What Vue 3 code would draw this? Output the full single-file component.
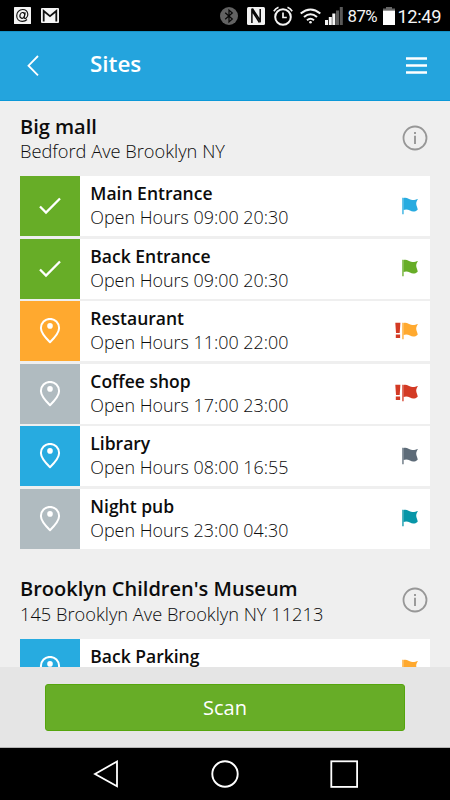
<script setup>
const groups = [
  {
    name: 'Big mall',
    address: 'Bedford Ave Brooklyn NY',
    sites: [
      { name: 'Main Entrance', hours: '09:00 20:30', tile: 'green', icon: 'check', flag: 'blue' },
      { name: 'Back Entrance', hours: '09:00 20:30', tile: 'green', icon: 'check', flag: 'green' },
      { name: 'Restaurant', hours: '11:00 22:00', tile: 'orange', icon: 'pin', flag: 'orange', alert: true },
      { name: 'Coffee shop', hours: '17:00 23:00', tile: 'gray', icon: 'pin', flag: 'red', alert: true },
      { name: 'Library', hours: '08:00 16:55', tile: 'blue', icon: 'pin', flag: 'slate' },
      { name: 'Night pub', hours: '23:00 04:30', tile: 'gray', icon: 'pin', flag: 'teal' },
    ],
  },
  {
    name: "Brooklyn Children's Museum",
    address: '145 Brooklyn Ave Brooklyn NY 11213',
    sites: [
      { name: 'Back Parking', tile: 'blue', icon: 'pin', flag: 'orange' },
    ],
  },
]
</script>

<template>
  <div class="screen">
    <div class="status">
      <svg class="s-mail" width="17" height="17" viewBox="0 0 17 17">
        <rect width="17" height="17" rx="0.6" fill="#f4f4f4" />
        <g fill="none" stroke="#111" stroke-width="1.15">
          <ellipse cx="8.3" cy="8.4" rx="2.3" ry="2.9" transform="rotate(18 8.3 8.4)" />
          <path d="M11.2 5.3 10.2 10c-.2 1.7 1 1.8 2 1 1.200-1 1.800-2.400 1.600-4C13.400 4.300 11.400 2.500 8.700 2.500 5.200 2.500 2.700 5.200 2.700 8.700c0 3.400 2.300 5.700 5.600 5.700 1.900 0 3.600-.7 4.700-1.900" />
        </g>
      </svg>
      <svg class="s-gmail" width="18" height="15" viewBox="0 0 18 15">
        <rect width="18" height="15" rx="1" fill="#f4f4f4" />
        <path d="M2.700 13.500V3L9 8.200 15.300 3v10.500" fill="none" stroke="#111" stroke-width="1.800" />
      </svg>
      <svg class="s-bt" width="18" height="18" viewBox="0 0 18 18">
        <circle cx="9" cy="9" r="9" fill="#626262" />
        <path d="M5.200 5.700 12.300 12 9 15V3l3.300 3-7.100 6.300" fill="none" stroke="#080808" stroke-width="1.200" />
      </svg>
      <svg class="s-nfc" width="18" height="18" viewBox="0 0 18 18">
        <rect width="18" height="18" rx="1.500" fill="#f2f2f2" />
        <path d="M4.900 16V3.500L12.500 15.500M5.300 1.500 13.200 13.500V2" fill="none" stroke="#080808" stroke-width="1.500" />
      </svg>
      <svg class="s-alarm" width="20" height="20" viewBox="0 0 20 20" fill="none" stroke="#f4f4f4">
        <circle cx="10" cy="11" r="7.800" stroke-width="2" />
        <path d="M10 6.500V11.500H13.800" stroke-width="1.700" />
        <path d="M.8 5.200Q2.500 2.500 5.500 1.300M14.500 1.300Q17.500 2.500 19.200 5.200" stroke-width="1.600" />
      </svg>
      <svg class="s-wifi" width="21" height="16" viewBox="0 0 21 16" fill="none" stroke="#f4f4f4" stroke-width="2.100">
        <path d="M.7 5.500Q10.500-2.500 20.300 5.500" />
        <path d="M4 9Q10.500 3.500 17 9" />
        <path d="M7 12.200Q10.500 9.300 14 12.200" />
        <circle cx="10.500" cy="14.300" r="1.300" fill="#f4f4f4" stroke="none" />
      </svg>
      <svg class="s-signal" width="18" height="18" viewBox="0 0 18 18" fill="#f4f4f4">
        <rect x="0" y="13" width="3" height="5" />
        <rect x="3.800" y="10" width="3" height="8" />
        <rect x="7.300" y="6.500" width="3" height="11.500" />
        <rect x="11" y="3.500" width="3" height="14.500" fill="#5a5a5a" />
        <rect x="14.800" y="0" width="3" height="18" fill="#5a5a5a" />
      </svg>
      <span class="pct">87%</span>
      <svg class="s-batt" width="12" height="18" viewBox="0 0 12 18">
        <path d="M3 0h6v1.500h3v2H0v-2h3z" fill="#666" />
        <rect y="3.500" width="12" height="14.500" fill="#fff" />
      </svg>
      <span class="time">12:49</span>
    </div>

    <header class="bar">
      <svg class="back" width="12" height="22" viewBox="0 0 12 22">
        <path d="M11 1 1.500 10.700 11 20.400" fill="none" stroke="#fff" stroke-width="1.800" />
      </svg>
      <h1>Sites</h1>
      <svg class="menu" width="21" height="19" viewBox="0 0 21 19">
        <path d="M0 1.500h21M0 8.500h21M0 15.500h21" stroke="#fff" stroke-width="2.400" />
      </svg>
    </header>

    <main class="content">
      <section v-for="g in groups" :key="g.name" class="group">
        <div class="group-head">
          <div>
            <h2>{{ g.name }}</h2>
            <p class="address">{{ g.address }}</p>
          </div>
          <svg class="info" width="26" height="26" viewBox="0 0 26 26">
            <circle cx="13" cy="13" r="11.500" fill="none" stroke="#979797" stroke-width="1.800" />
            <path d="M13 10.700V19M13 7v2.100" stroke="#979797" stroke-width="1.900" />
          </svg>
        </div>
        <div class="list">
          <article v-for="s in g.sites" :key="s.name" class="row">
            <div class="tile" :class="s.tile">
              <svg v-if="s.icon === 'check'" width="24" height="26" viewBox="0 0 24 26">
                <path d="M2 13.500 8 19.500 22 5.500" fill="none" stroke="#fff" stroke-width="2.300" />
              </svg>
              <svg v-else width="24" height="26" viewBox="0 0 24 26">
                <path d="M12 24.200C8 20.300 2.900 15.200 2.900 10A9.100 9.100 0 0 1 21.100 10C21.100 15.200 16 20.300 12 24.200Z" fill="none" stroke="#fff" stroke-width="2" stroke-linejoin="round" />
                <circle cx="12" cy="7.900" r="2.800" fill="#fff" />
              </svg>
            </div>
            <div class="text">
              <h3>{{ s.name }}</h3>
              <p v-if="s.hours" class="hours">Open Hours {{ s.hours }}</p>
            </div>
            <div class="marks">
              <svg v-if="s.alert" width="6" height="17" viewBox="0 0 6 17" fill="#d33a24">
                <path d="M.3.700h5.100L4.700 11H1zM.8 12.500h4.300v3.500H.8z" />
              </svg>
              <svg class="flag" :class="s.flag" width="17" height="18" viewBox="0 0 17 18" fill="currentColor">
                <path d="M.3.700h1.300v16.500H.3z" />
                <path d="M1.500 1.200C5-.2 7 3.300 10.600 3C12.800 2.900 14.200 2.400 16 1.900C14.500 4 14 5.600 14.300 7.500C14.500 9.300 15.600 10.600 15.700 12.700C13.500 14.800 10.500 15.300 8 13.600C5.700 12.300 3.700 12.100 1.500 13Z" />
              </svg>
            </div>
          </article>
        </div>
      </section>
    </main>

    <footer class="action">
      <button class="scan">Scan</button>
    </footer>

    <nav class="nav">
      <svg width="26" height="30" viewBox="0 0 26 30"><path d="M2 15 24 2.500V27.200Z" fill="none" stroke="#fff" stroke-width="1.800" /></svg>
      <svg class="home" width="30" height="30" viewBox="0 0 30 30"><circle cx="15" cy="15" r="12.700" fill="none" stroke="#fff" stroke-width="1.900" /></svg>
      <svg width="30" height="30" viewBox="0 0 30 30"><rect x="2.300" y="2.300" width="25.800" height="25.600" fill="none" stroke="#fff" stroke-width="1.800" /></svg>
    </nav>
  </div>
</template>

<style>
body { margin: 0; background: #efefef; }
</style>

<style scoped>
* { box-sizing: border-box; }
.screen {
  width: 450px;
  height: 800px;
  display: flex;
  flex-direction: column;
  overflow: hidden;
  background: #efefef;
  color: #0c0c0c;
  font-family: "Open Sans", sans-serif;
}
svg { display: block; flex: none; }
h1, h2, h3, p { margin: 0; white-space: nowrap; }
.status {
  flex: none;
  height: 31px;
  background: #000;
  color: #f4f4f4;
  display: flex;
  align-items: center;
  padding-left: 14px;
  font-family: Roboto, sans-serif;
  white-space: nowrap;
}
.s-gmail { margin-left: 10px; }
.s-bt { margin-left: 160.500px; }
.s-nfc { margin-left: 9px; }
.s-alarm { margin-left: 8.500px; }
.s-wifi { margin-left: 7px; }
.s-signal { margin-left: 4px; }
.pct { width: 31px; margin-left: 4.500px; padding-top: 1px; font-size: 16.800px; letter-spacing: -0.500px; }
.s-batt { margin-left: 4.500px; }
.time { margin-left: 2.500px; font-size: 18.300px; letter-spacing: -0.400px; padding-top: 1px; }
.bar {
  flex: none;
  height: 70px;
  background: #24a4dd;
  border-top: 1px solid #1593c9;
  border-bottom: 1px solid #0b98d8;
  display: flex;
  align-items: center;
  color: #fff;
  padding: 0 23px 0 27px;
}
h1 { margin: 0 0 4px 51px; font-size: 22.400px; line-height: 32px; font-weight: 600; }
.menu { margin-left: auto; }
.content { height: 566px; overflow: hidden; padding: 0 20px; }
.group { height: 462.500px; }
.group-head {
  height: 75.200px;
  padding-top: 12.700px;
  display: flex;
  justify-content: space-between;
}
h2 { font-size: 20px; line-height: 25.500px; font-weight: 600; }
.address { font-size: 18.250px; line-height: 24px; font-weight: 300; }
.info { margin: 11.300px 2px 0 0; }
.list { display: flex; flex-direction: column; gap: 2.500px; }
.row { height: 60px; display: flex; background: #fff; flex: none; }
.tile { width: 60px; display: flex; align-items: center; justify-content: center; }
.tile.green { background: #67ad27; }
.tile.orange { background: #ffa92f; }
.tile.gray { background: #b0bbc0; }
.tile.blue { background: #27abe0; }
.text { padding: 6px 0 0 10.300px; }
h3 { font-size: 17.500px; line-height: 23px; font-weight: 600; }
.hours { margin-top: 0.100px; font-size: 17.900px; line-height: 24px; font-weight: 300; }
.marks { margin: 20.800px 11px 0 auto; display: flex; align-items: flex-start; gap: 1.500px; }
.flag.blue { color: #27abe0; }
.flag.green { color: #67ad27; }
.flag.orange { color: #ffa92f; }
.flag.red { color: #d33a24; }
.flag.slate { color: #5d6b78; }
.flag.teal { color: #0796a8; }
.action {
  flex: none;
  height: 81px;
  background: #e5e5e5;
  border-bottom: 1px solid #b5b5b5;
  padding: 17px 45px 0;
}
.scan {
  display: block;
  width: 100%;
  height: 47px;
  border: 1px solid #55a50d;
  border-radius: 3px;
  background: #67ad27;
  color: #fff;
  font: 400 20px/45px "Open Sans", sans-serif;
  padding: 0;
}
.nav {
  flex: none;
  height: 52px;
  background: #000;
  display: flex;
  align-items: center;
  justify-content: space-between;
  padding: 0 91px 0 93px;
}
.home { margin-left: 2px; }
</style>
